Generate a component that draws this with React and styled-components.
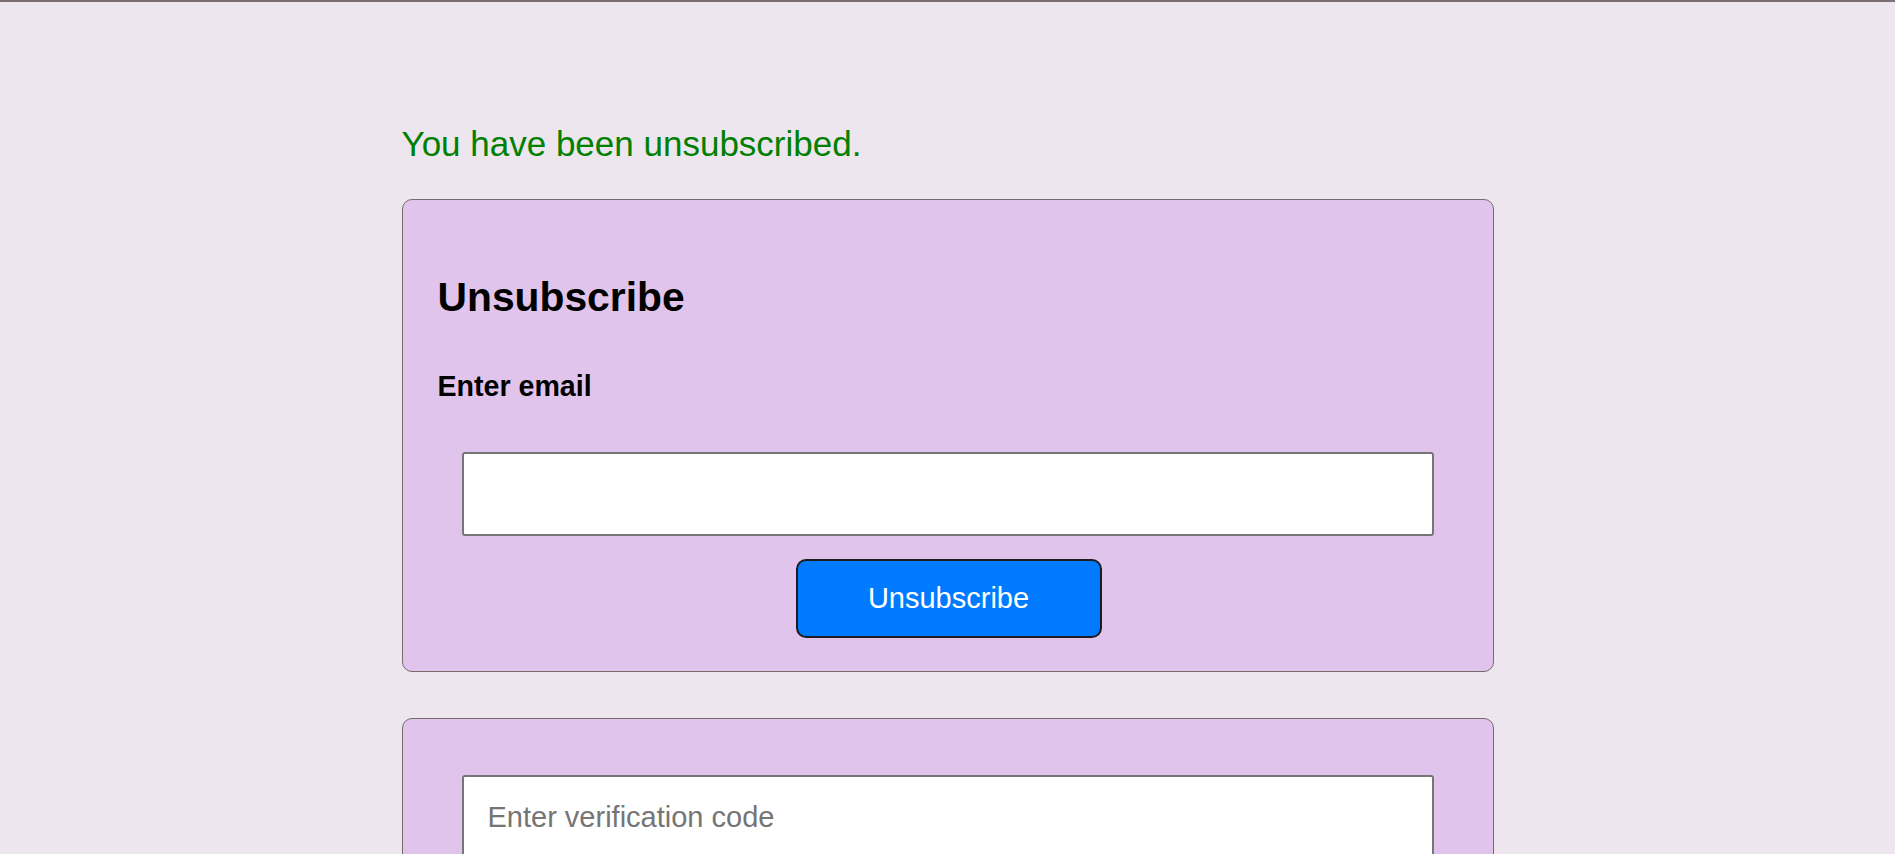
import React, {useState} from 'react';
import styled, {createGlobalStyle} from 'styled-components';

const GlobalStyle = createGlobalStyle`
    html, body {
        margin: 0;
        padding: 0;
        background: #ede6ee;
        font-family: "Liberation Sans", Arial, sans-serif;
    }
`

function App(){
    const [email, setEmail] = useState('');
    const [code, setCode] = useState('');

    return(
    <Page>
        <GlobalStyle/>
        <Wrapper>
            <Message>You have been unsubscribed.</Message>

            <Card>
                <Title>Unsubscribe</Title>
                <Label htmlFor="email">Enter email</Label>
                <Input
                    id="email"
                    type="email"
                    value={email}
                    onChange={(e)=> setEmail(e.target.value)}
                />
                <ButtonRow>
                    <Button type="button">Unsubscribe</Button>
                </ButtonRow>
            </Card>

            <Card compact>
                <Input
                    type="text"
                    placeholder="Enter verification code"
                    value={code}
                    onChange={(e)=> setCode(e.target.value)}
                />
            </Card>
        </Wrapper>
    </Page>
    )
}

export default App;

const Page = styled.div`
    min-height: 100vh;
    border-top: 2px solid #7b6f72;
    box-sizing: border-box;
`

const Wrapper = styled.div`
    width: 1092px;
    margin: 0 auto;
    padding-top: 122px;
    display: flex;
    flex-direction: column;
`

const Message = styled.p`
    margin: 0 0 35px;
    color: #008000;
    font-size: 35px;
    line-height: 40px;
`

const Card = styled.div`
    display: flex;
    flex-direction: column;
    box-sizing: border-box;
    background: #e0c4ec;
    border: 1.5px solid #766a6d;
    border-radius: 10px;
    padding: ${props => props.compact ? '56px 35px 40px' : '0 35px 33px'};
    margin-bottom: 46px;
`

const Title = styled.h2`
    margin: 74px 0 0;
    font-size: 40.8px;
    line-height: 46px;
    font-weight: 700;
    color: #000;
`

const Label = styled.label`
    margin: 50px 0 0;
    font-size: 28.6px;
    line-height: 32px;
    font-weight: 700;
    color: #000;
`

const Input = styled.input`
    box-sizing: border-box;
    margin: ${props => props.id ? '50px' : '0'} 24px 0;
    height: 84px;
    padding: 0 24px;
    background: #fff;
    border: 2px solid #767676;
    border-radius: 3px;
    font-family: "Liberation Sans", Arial, sans-serif;
    font-size: 29px;
    color: #000;
    outline: none;

    &::placeholder {
        color: #757575;
    }
`

const ButtonRow = styled.div`
    display: flex;
    justify-content: center;
    margin-top: 23px;
`

const Button = styled.button`
    box-sizing: border-box;
    width: 306px;
    height: 79px;
    margin-left: 2px;
    background: #007bff;
    color: #fff;
    border: 2px solid #1c1c1c;
    border-radius: 10px;
    font-family: "Liberation Sans", Arial, sans-serif;
    font-size: 29px;
    cursor: pointer;
`
